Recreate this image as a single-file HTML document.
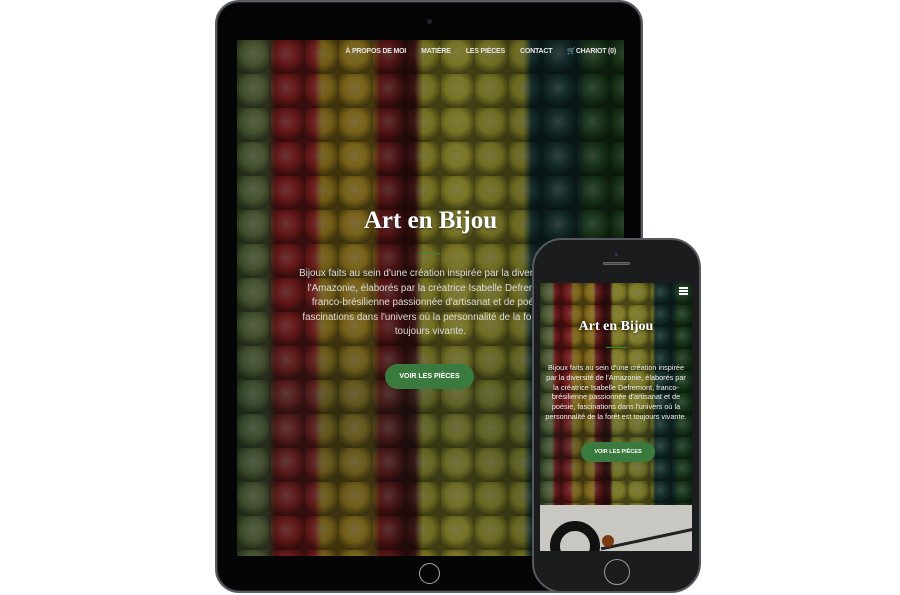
<!DOCTYPE html>
<html><head><meta charset="utf-8"><style>
*{margin:0;padding:0;box-sizing:border-box}
body{width:900px;height:595px;background:#fff;position:relative;overflow:hidden;font-family:"Liberation Sans",sans-serif}
.tab{position:absolute;left:215px;top:0;width:428px;height:593px;background:#050505;border-radius:24px;border:2px solid #5a5e63;box-shadow:inset 0 0 0 1px #222}
.cam{position:absolute;left:427px;top:19px;width:5px;height:5px;border-radius:50%;background:#223}
.scr{position:absolute;overflow:hidden}
.beads{position:absolute;inset:0;
background:
radial-gradient(circle at 45% 40%,rgba(255,255,255,.25) 0,rgba(255,255,255,0) 40%,rgba(0,0,0,.45) 72%) 0 0/34px 34px,
linear-gradient(180deg,rgba(0,0,0,0) 0,rgba(0,0,0,0) 55%,rgba(40,90,80,.25) 70%,rgba(0,0,0,0) 100%),
linear-gradient(90deg,#6b8a4a 0,#8fa060 8%,#b02828 10%,#c03030 20%,#d0a828 22%,#e0b830 35%,#a02424 37%,#602020 46%,#d0c838 48%,#e0d848 60%,#d0cc40 62%,#c0bc38 74%,#1f4a48 76%,#214848 88%,#2a5a2c 90%,#2a5a2a 100%)}
.dim{position:absolute;inset:0;background:rgba(0,0,0,.45)}
.nav{position:absolute;top:7px;right:8px;color:#e6e6e6;font-size:7px;font-weight:bold;letter-spacing:-.2px}
.nav span{margin-left:15px}
h1{font-family:"Liberation Serif",serif;font-weight:bold;color:#fff;text-align:center;position:absolute;left:0;right:0;text-shadow:0 1px 2px rgba(0,0,0,.5)}
.line{position:absolute;background:#3a8a3e;height:2px}
p.t{position:absolute;left:0;right:0;text-align:center;color:#ddd;white-space:nowrap}
.btn{position:absolute;background:#3b7a3f;color:#fff;font-weight:bold;text-align:center;border-radius:14px}
.ph{position:absolute;left:532px;top:238px;width:169px;height:355px;background:#1b1c1e;border-radius:30px;border:2px solid #55595e}
.hb{position:absolute;border-radius:50%;border:1.5px solid #bbb}
</style></head><body>
<div class="tab"></div>
<div class="cam"></div>
<div class="scr" style="left:237px;top:40px;width:387px;height:516px">
 <div class="beads"></div><div class="dim"></div>
 <div class="nav"><span>À PROPOS DE MOI</span><span>MATIÈRE</span><span>LES PIÈCES</span><span>CONTACT</span><span>🛒CHARIOT (0)</span></div>
 <h1 style="top:167px;font-size:25px">Art en Bijou</h1>
 <div class="line" style="left:183px;top:213px;width:20px;height:1px"></div>
 <p class="t" style="top:227px;font-size:9.8px;line-height:14.5px">Bijoux faits au sein d'une création inspirée par la diversité de<br>l'Amazonie, élaborés par la créatrice Isabelle Defremont,<br>franco-brésilienne passionnée d'artisanat et de poésie,<br>fascinations dans l'univers où la personnalité de la forêt est<br>toujours vivante.</p>
 <div class="btn" style="left:148px;top:324px;width:89px;height:25px;line-height:25px;font-size:7px">VOIR LES PIÈCES</div>
</div>
<div class="hb" style="left:419px;top:563px;width:21px;height:21px;border-color:#aaa"></div>
<div class="ph"></div>
<div style="position:absolute;left:615px;top:253px;width:3px;height:3px;border-radius:50%;background:#335"></div>
<div style="position:absolute;left:603px;top:262px;width:27px;height:3px;border-radius:2px;background:#444;border:1px solid #666"></div>
<div class="scr" style="left:540px;top:283px;width:152px;height:268px">
 <div style="position:absolute;left:0;top:0;width:152px;height:222px">
 <div class="beads" style="background-size:22px 22px,100% 100%,100% 100%"></div><div class="dim" style="background:rgba(0,0,0,.4)"></div></div>
 <div style="position:absolute;right:4px;top:4px;width:9px;height:1.5px;background:#fff;box-shadow:0 3px #fff,0 6px #fff"></div>
 <h1 style="top:36px;font-size:14px">Art en Bijou</h1>
 <div class="line" style="left:66px;top:64px;width:20px;height:1px"></div>
 <p class="t" style="top:80px;font-size:7.3px;line-height:9.8px;color:#eee">Bijoux faits au sein d'une création inspirée<br>par la diversité de l'Amazonie, élaborés par<br>la créatrice Isabelle Defremont, franco-<br>brésilienne passionnée d'artisanat et de<br>poésie, fascinations dans l'univers où la<br>personnalité de la forêt est toujours vivante.</p>
 <div class="btn" style="left:41px;top:159px;width:74px;height:20px;line-height:20px;font-size:5.5px;border-radius:10px">VOIR LES PIÈCES</div>
 <div style="position:absolute;left:0;top:222px;width:152px;height:46px;background:#c9c7c2"></div>
 <div style="position:absolute;left:10px;top:238px;width:50px;height:50px;border-radius:50%;border:10px solid #111"></div>
 <div style="position:absolute;left:60px;top:254px;width:100px;height:3px;background:#222;transform:rotate(-12deg)"></div>
 <div style="position:absolute;left:62px;top:252px;width:12px;height:12px;border-radius:50%;background:#7a3a14"></div>
</div>
<div class="hb" style="left:604px;top:559px;width:26px;height:26px;border-color:#999"></div>
</body></html>
